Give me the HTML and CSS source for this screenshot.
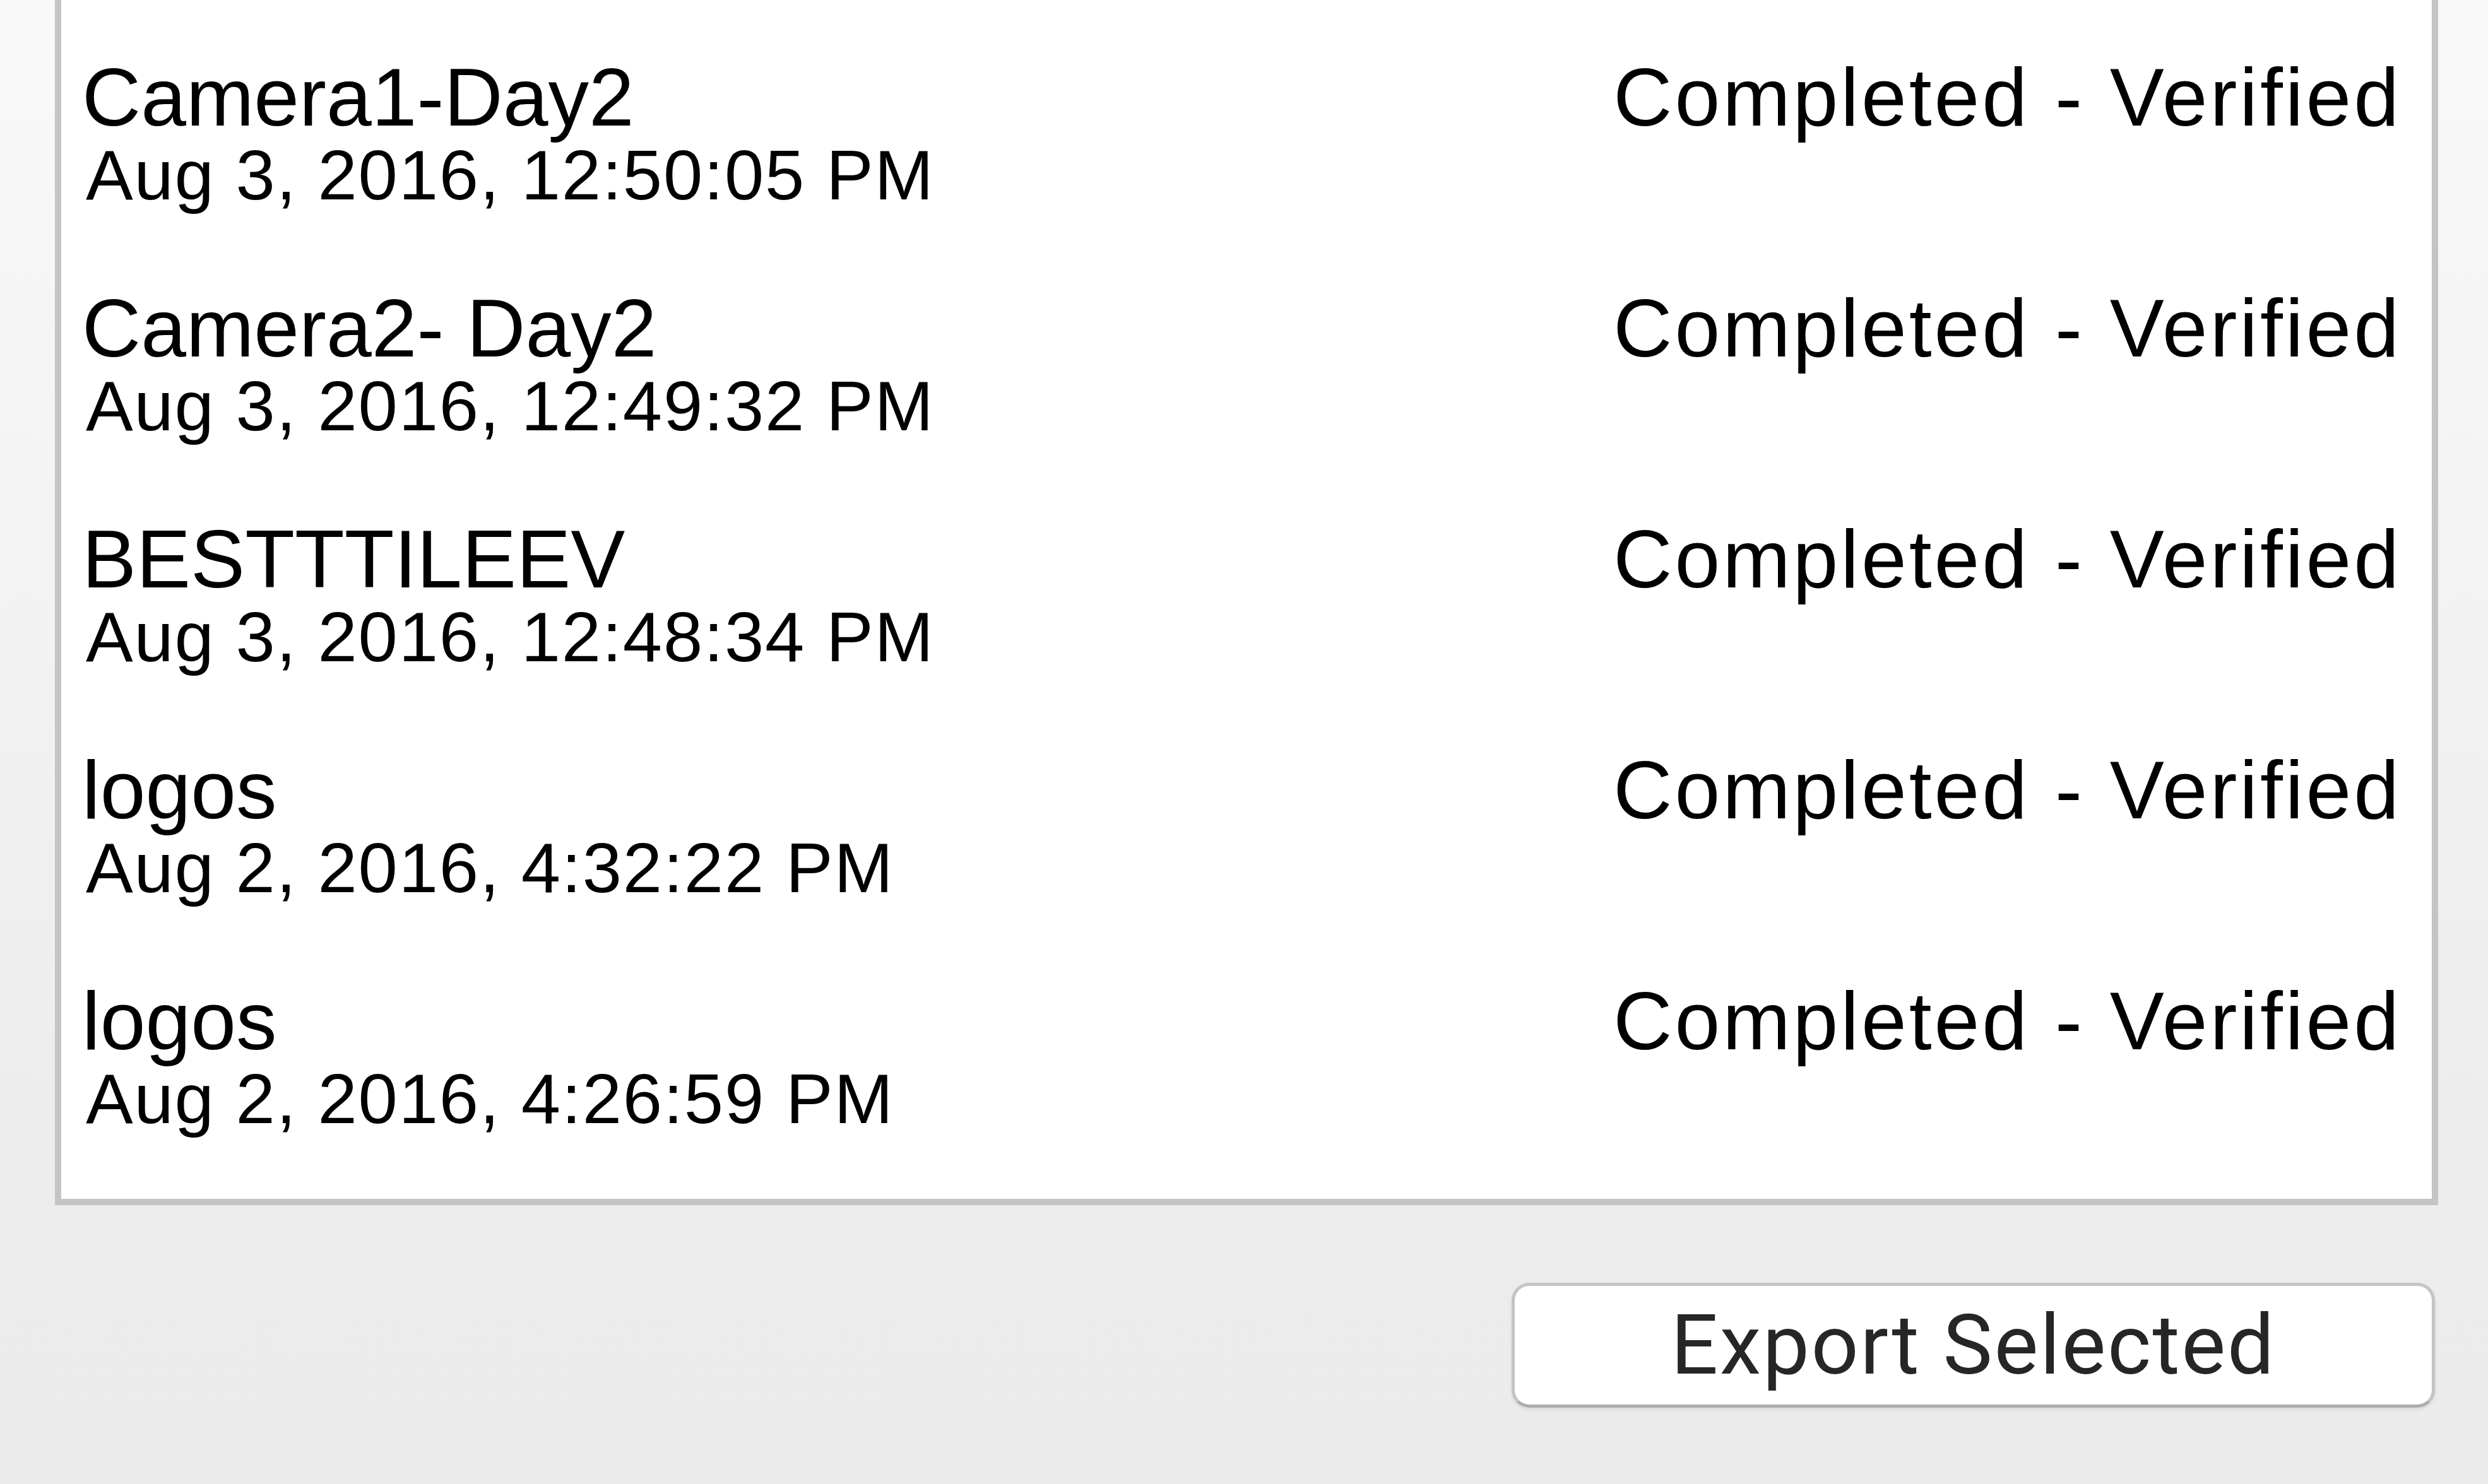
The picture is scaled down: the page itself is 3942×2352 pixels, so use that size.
FILE: index.html
```html
<!DOCTYPE html>
<html lang="en">
<head>
    <meta charset="UTF-8">
    <meta name="viewport" content="width=device-width, initial-scale=1.0">
    <title>Imports</title>
    <link rel="stylesheet" href="styles.css">
</head>
<body>
    <div id="window">
        <div class="import-list">
            <div class="import-row">
                <div class="import-info">
                    <div class="import-name">Camera1-Day2</div>
                    <div class="import-date">Aug 3, 2016, 12:50:05 PM</div>
                </div>
                <div class="import-status">Completed - Verified</div>
            </div>
            <div class="import-row">
                <div class="import-info">
                    <div class="import-name">Camera2- Day2</div>
                    <div class="import-date">Aug 3, 2016, 12:49:32 PM</div>
                </div>
                <div class="import-status">Completed - Verified</div>
            </div>
            <div class="import-row">
                <div class="import-info">
                    <div class="import-name">BESTTTILEEV</div>
                    <div class="import-date">Aug 3, 2016, 12:48:34 PM</div>
                </div>
                <div class="import-status">Completed - Verified</div>
            </div>
            <div class="import-row">
                <div class="import-info">
                    <div class="import-name">logos</div>
                    <div class="import-date">Aug 2, 2016, 4:32:22 PM</div>
                </div>
                <div class="import-status">Completed - Verified</div>
            </div>
            <div class="import-row">
                <div class="import-info">
                    <div class="import-name">logos</div>
                    <div class="import-date">Aug 2, 2016, 4:26:59 PM</div>
                </div>
                <div class="import-status">Completed - Verified</div>
            </div>
        </div>

        <div class="actions">
            <button class="export-button">Export Selected</button>
        </div>
    </div>
</body>
</html>
```

FILE: styles.css
```css
body {
    margin: 0;
    height: 100vh;
    overflow: hidden;
    background: linear-gradient(#f9f9f9, #ececec 80%, #ebebeb);
    font-family: "Liberation Sans", Arial, sans-serif;
}

#window {
    padding: 0 79px 0 87px;
}

.import-list {
    background: #fff;
    border: 10px solid #c4c4c4;
    border-top: none;
    padding: 90px 0 99px 33px;
    display: flex;
    flex-direction: column;
    gap: 119px;
}

.import-row {
    display: flex;
    justify-content: space-between;
    align-items: flex-start;
    color: #000;
}

.import-name {
    font-size: 129px;
    line-height: 129px;
    white-space: nowrap;
}

.import-date {
    font-size: 112px;
    line-height: 118px;
    margin-left: 6px;
    letter-spacing: 1.8px;
    white-space: nowrap;
}

.import-status {
    font-size: 129px;
    line-height: 129px;
    letter-spacing: 4px;
    padding-right: 48px;
    white-space: nowrap;
}

.actions {
    display: flex;
    justify-content: flex-end;
    padding: 123px 5px 0 0;
}

.export-button {
    width: 1463px;
    height: 198px;
    background: #fff;
    border: 5px solid #c4c4c4;
    border-bottom-color: #adadad;
    border-radius: 28px;
    box-shadow: 0 3px 5px rgba(0, 0, 0, 0.08);
    font-family: Roboto, "Noto Sans", sans-serif;
    font-size: 132px;
    letter-spacing: 2.5px;
    color: #262626;
    padding: 0;
    cursor: pointer;
}
```
